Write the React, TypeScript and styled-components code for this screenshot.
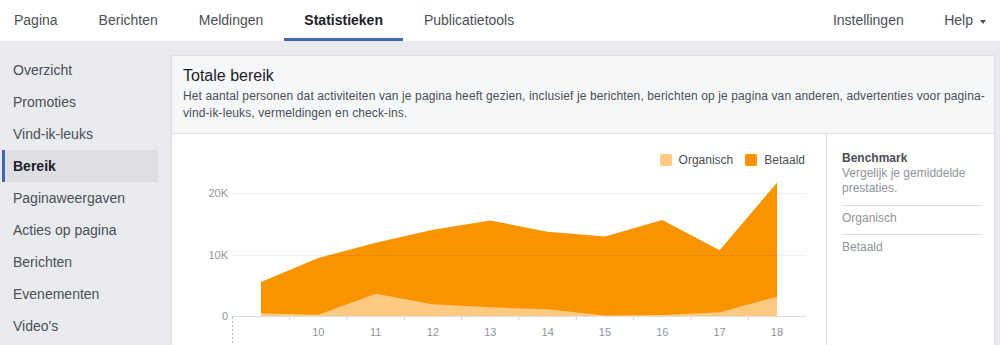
import React from "react";
import styled, { createGlobalStyle } from "styled-components";

const GlobalStyle = createGlobalStyle`
  html, body {
    margin: 0;
    padding: 0;
    height: 345px;
    overflow: hidden;
    background: #e9ebee;
    font-family: "Liberation Sans", Arial, Helvetica, sans-serif;
  }
`;

const TopNav = styled.nav`
  display: flex;
  justify-content: space-between;
  height: 41px;
  background: #fff;
`;

const TabGroup = styled.div`
  display: flex;
`;

const Tab = styled.a<{ $active?: boolean }>`
  position: relative;
  padding: 0 20.5px;
  line-height: 41px;
  font-size: 14px;
  color: ${(p) => (p.$active ? "#1d2129" : "#4b4f56")};
  font-weight: ${(p) => (p.$active ? "bold" : "normal")};
  text-decoration: none;
  white-space: nowrap;

  &:first-child {
    padding-left: 14px;
  }

  &::after {
    content: "";
    display: ${(p) => (p.$active ? "block" : "none")};
    position: absolute;
    left: 0;
    right: 0;
    bottom: 0;
    height: 3px;
    background: #4267b2;
  }
`;

const HelpTab = styled(Tab)`
  padding: 0 14px 0 20px;
  display: flex;
  align-items: center;
  gap: 7px;
`;

const Caret = styled.span`
  width: 0;
  height: 0;
  border-left: 3px solid transparent;
  border-right: 3px solid transparent;
  border-top: 4px solid #4b4f56;
  margin-top: 2px;
`;

const Body = styled.div`
  display: flex;
  gap: 13px;
`;

const Sidebar = styled.ul`
  list-style: none;
  margin: 0;
  padding: 13px 0 0 2px;
  width: 156px;
  flex-shrink: 0;
`;

const SideItem = styled.li<{ $active?: boolean }>`
  height: 32px;
  line-height: 32px;
  padding-left: 8px;
  border-left: 3px solid ${(p) => (p.$active ? "#4267b2" : "transparent")};
  background: ${(p) => (p.$active ? "#dddfe2" : "transparent")};
  font-size: 14px;
  color: ${(p) => (p.$active ? "#1d2129" : "#4b4f56")};
  font-weight: ${(p) => (p.$active ? "bold" : "normal")};
`;

const Panel = styled.section`
  margin-top: 14px;
  width: 824px;
  box-sizing: border-box;
  border: 1px solid #dddfe2;
  border-bottom: none;
  background: #fff;
`;

const PanelHeader = styled.header`
  background: #f6f7f9;
  border-bottom: 1px solid #dddfe2;
  padding: 10px 3px 11px 11px;
`;

const Title = styled.h2`
  margin: 0;
  font-size: 16px;
  line-height: 20px;
  font-weight: normal;
  color: #1d2129;
`;

const Description = styled.p`
  margin: 2px 0 0;
  font-size: 12px;
  line-height: 17px;
  letter-spacing: 0.12px;
  color: #4b4f56;
`;

const PanelBody = styled.div`
  display: flex;
`;

const ChartColumn = styled.div`
  width: 654px;
  flex-shrink: 0;
`;

const Legend = styled.div`
  display: flex;
  justify-content: flex-end;
  gap: 12px;
  padding: 18px 21px 0 0;
`;

const LegendItem = styled.div`
  display: flex;
  align-items: center;
  gap: 7px;
  font-size: 12px;
  line-height: 16px;
  color: #4b4f56;
`;

const Swatch = styled.span<{ $color: string }>`
  width: 12px;
  height: 12px;
  border-radius: 2px;
  background: ${(p) => p.$color};
`;

const Benchmark = styled.aside`
  flex: 1;
  border-left: 1px solid #dddfe2;
  padding: 17px 12px 0 15px;
  min-height: 220px;
`;

const BenchTitle = styled.div`
  font-size: 12px;
  line-height: 15px;
  font-weight: bold;
  color: #4b4f56;
`;

const BenchText = styled.div`
  font-size: 12px;
  line-height: 15px;
  color: #90949c;
  margin-bottom: 9px;
`;

const BenchOption = styled.div`
  height: 24px;
  border-top: 1px solid #dddfe2;
  padding-top: 4px;
  font-size: 12px;
  line-height: 16px;
  color: #90949c;
`;

const ORGANIC = "#fec981";
const PAID = "#f79400";

const total = [5.5, 9.35, 11.8, 13.9, 15.4, 13.6, 12.8, 15.5, 10.6, 21.5];
const organic = [0.44, 0.2, 3.6, 1.9, 1.4, 1.1, 0.1, 0.15, 0.6, 3.1];

const baseY = 317;
const perK = 6.2;
const x0 = 261;
const step = 57.33;
const xAt = (i: number) => x0 + i * step;
const yAt = (v: number) => baseY - v * perK;

function area(values: number[]) {
  const top = values.map((v, i) => `${xAt(i).toFixed(1)},${yAt(v).toFixed(1)}`);
  return [
    `${xAt(0)},${baseY}`,
    ...top,
    `${xAt(values.length - 1).toFixed(1)},${baseY}`,
  ].join(" ");
}

function ReachChart() {
  const days = [10, 11, 12, 13, 14, 15, 16, 17, 18];
  return (
    <svg width="654" height="180" style={{ display: "block" }}>
      <g transform="translate(-172,-169)" fontFamily="Liberation Sans, Arial, sans-serif" fontSize="11" fill="#90949c">
        <line x1="232" x2="806" y1="194.5" y2="194.5" stroke="#eceef1" />
        <polygon points={area(total)} fill={PAID} />
        <polygon points={area(organic)} fill={ORGANIC} />
        <line x1="232" x2="806" y1="256.5" y2="256.5" stroke="rgba(0,0,0,0.06)" />
        <line x1="232" x2="806" y1="317.5" y2="317.5" stroke="#dddfe2" />
        <line x1="232.5" x2="232.5" y1="318" y2="350" stroke="#bec2c9" strokeDasharray="2,2" />
        {days.map((d, i) => (
          <line
            key={`t${d}`}
            x1={xAt(i) + step / 2}
            x2={xAt(i) + step / 2}
            y1="318"
            y2="321"
            stroke="#ccd0d5"
          />
        ))}
        <text x="228" y="198" textAnchor="end">20K</text>
        <text x="228" y="260" textAnchor="end">10K</text>
        <text x="228" y="321" textAnchor="end">0</text>
        {days.map((d, i) => (
          <text key={d} x={xAt(i + 1)} y="336.5" textAnchor="middle">
            {d}
          </text>
        ))}
      </g>
    </svg>
  );
}

const sideItems = [
  "Overzicht",
  "Promoties",
  "Vind-ik-leuks",
  "Bereik",
  "Paginaweergaven",
  "Acties op pagina",
  "Berichten",
  "Evenementen",
  "Video's",
];

export default function App() {
  return (
    <>
      <GlobalStyle />
      <TopNav>
        <TabGroup>
          <Tab>Pagina</Tab>
          <Tab>Berichten</Tab>
          <Tab>Meldingen</Tab>
          <Tab $active>Statistieken</Tab>
          <Tab>Publicatietools</Tab>
        </TabGroup>
        <TabGroup>
          <Tab>Instellingen</Tab>
          <HelpTab>
            Help <Caret />
          </HelpTab>
        </TabGroup>
      </TopNav>
      <Body>
        <Sidebar>
          {sideItems.map((item) => (
            <SideItem key={item} $active={item === "Bereik"}>
              {item}
            </SideItem>
          ))}
        </Sidebar>
        <Panel>
          <PanelHeader>
            <Title>Totale bereik</Title>
            <Description>
              Het aantal personen dat activiteiten van je pagina heeft gezien, inclusief je berichten,
              berichten op je pagina van anderen, advertenties voor pagina-vind-ik-leuks, vermeldingen
              en check-ins.
            </Description>
          </PanelHeader>
          <PanelBody>
            <ChartColumn>
              <Legend>
                <LegendItem>
                  <Swatch $color={ORGANIC} />
                  Organisch
                </LegendItem>
                <LegendItem>
                  <Swatch $color={PAID} />
                  Betaald
                </LegendItem>
              </Legend>
              <ReachChart />
            </ChartColumn>
            <Benchmark>
              <BenchTitle>Benchmark</BenchTitle>
              <BenchText>Vergelijk je gemiddelde prestaties.</BenchText>
              <BenchOption>Organisch</BenchOption>
              <BenchOption>Betaald</BenchOption>
            </Benchmark>
          </PanelBody>
        </Panel>
      </Body>
    </>
  );
}
